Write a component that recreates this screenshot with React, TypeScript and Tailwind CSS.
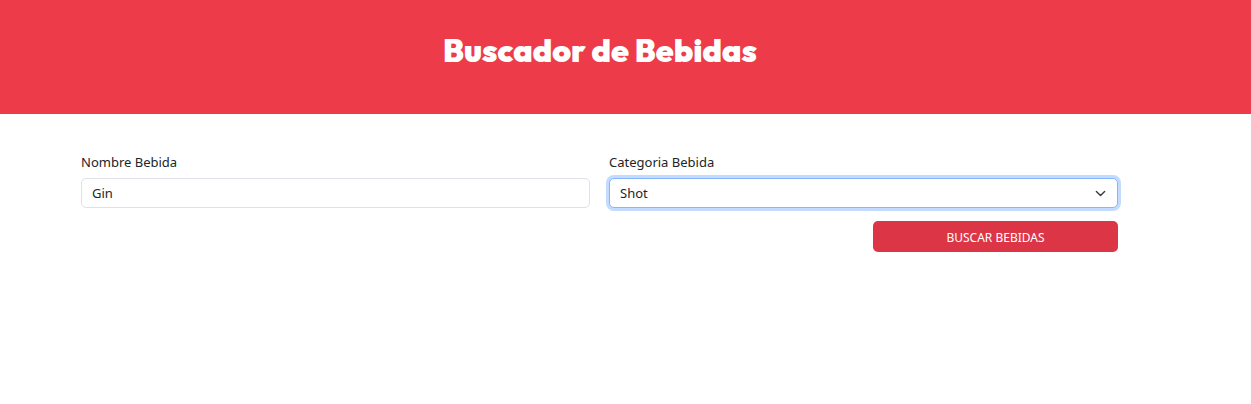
import { useState } from "react";

export default function App() {
  const [nombre, setNombre] = useState("Gin");
  const [categoria, setCategoria] = useState("Shot");

  return (
    <div className="font-['Noto_Sans',sans-serif] text-[13px] leading-5 text-[#212529]">
      <header className="bg-[#ed3b4a] pt-8 pr-[51px] pb-[46px] text-center">
        <h1 className="font-['Outfit','Lato',sans-serif] text-[32px] leading-9 font-black text-white">
          Buscador de Bebidas
        </h1>
      </header>
      <main className="pt-[38px] pr-[133px] pl-[81px]">
        <form onSubmit={(e) => e.preventDefault()}>
          <div className="grid grid-cols-2 gap-x-[19px]">
            <div>
              <label htmlFor="nombre" className="mb-[6px] block">
                Nombre Bebida
              </label>
              <input
                id="nombre"
                type="text"
                value={nombre}
                onChange={(e) => setNombre(e.target.value)}
                className="block h-[30px] w-full rounded-[5px] border border-[#dee2e6] bg-white px-[10px] outline-none"
              />
            </div>
            <div>
              <label htmlFor="categoria" className="mb-[6px] block">
                Categoria Bebida
              </label>
              <div className="grid items-center">
                <select
                  id="categoria"
                  value={categoria}
                  onChange={(e) => setCategoria(e.target.value)}
                  className="col-start-1 row-start-1 block h-[30px] w-full appearance-none rounded-[5px] border border-[#86b7fe] bg-white pr-8 pl-[10px] ring-3 ring-[#c2dbfe] outline-none"
                >
                  <option>Shot</option>
                </select>
                <svg
                  viewBox="0 0 16 16"
                  className="pointer-events-none col-start-1 row-start-1 mr-3 h-[11px] w-[11px] justify-self-end"
                  fill="none"
                  stroke="#343a40"
                  strokeWidth="2"
                  strokeLinecap="round"
                  strokeLinejoin="round"
                >
                  <path d="m2 5 6 6 6-6" />
                </svg>
              </div>
            </div>
          </div>
          <div className="mt-[13px] flex justify-end">
            <button
              type="submit"
              className="h-[31px] w-[245px] rounded-[5px] bg-[#dc3545] pt-[2px] text-xs text-white uppercase"
            >
              Buscar Bebidas
            </button>
          </div>
        </form>
      </main>
    </div>
  );
}
